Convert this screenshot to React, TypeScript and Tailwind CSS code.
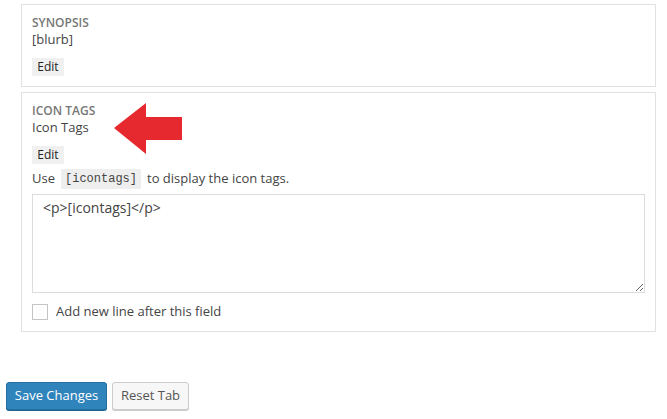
import React from 'react';

const font = { fontFamily: '"Open Sans", "Noto Sans", sans-serif' };

function EditButton() {
  return (
    <div className="flex mt-[10px]">
      <button className="h-[18px] w-[32px] bg-[#f0f0f0] text-[12px] leading-[18px] text-[#222]">
        Edit
      </button>
    </div>
  );
}

function Arrow() {
  return (
    <svg className="absolute left-[114px] top-[103px]" width="68" height="51" viewBox="0 0 68 51">
      <polygon points="0,25 32,0 32,14 68,14 68,37 32,37 32,51" fill="#e5292e" />
    </svg>
  );
}

export default function App() {
  return (
    <div className="relative w-[667px] h-[419px] bg-white text-[#444]" style={font}>
      <div className="pl-[21px] pr-[11px] pt-[4px]">
        <div className="border border-[#e1e1e1] h-[83px] px-[10px] pt-[11px]">
          <div className="text-[12px] leading-[14px] font-semibold text-[#777]">SYNOPSIS</div>
          <div className="text-[13px] leading-[18px] text-[#444]">[blurb]</div>
          <EditButton />
        </div>

        <div className="border border-[#e1e1e1] h-[240px] mt-[5px] px-[10px] pt-[11px]">
          <div className="text-[12px] leading-[14px] font-semibold text-[#777]">ICON TAGS</div>
          <div className="text-[13px] leading-[18px] text-[#444]">Icon Tags</div>
          <EditButton />
          <div className="flex items-center h-[20px] mt-[5px] text-[13px]">
            <span>Use</span>
            <code
              className="mx-[6px] px-[4px] h-[20px] leading-[20px] bg-[#eeeeee] text-[12px] text-[#444]"
              style={{ fontFamily: '"Liberation Mono", monospace' }}
            >
              [icontags]
            </code>
            <span>to display the icon tags.</span>
          </div>
          <textarea
            className="block w-full h-[99px] mt-[5px] border border-[#dcdcdc] pl-[10px] pr-[6px] pt-[4px] text-[14px] leading-[18px] text-[#444] outline-none resize-y"
            style={font}
            defaultValue="<p>[icontags]</p>"
          />
          <label className="flex items-center mt-[9px] text-[13px] text-[#444]">
            <span className="w-[16px] h-[16px] border border-[#c4c4c4] bg-white" />
            <span className="ml-[8px]">Add new line after this field</span>
          </label>
        </div>
      </div>

      <Arrow />

      <div className="flex gap-[5px] pl-[6px] mt-[50px]">
        <button className="h-[28px] w-[101px] rounded-[3px] bg-[#2f84bc] border border-[#23709f] text-white text-[13px] shadow-[0_1px_0_#1f6490]">
          Save Changes
        </button>
        <button className="h-[28px] w-[77px] rounded-[3px] bg-[#f7f7f7] border border-[#cccccc] text-[#555] text-[13px] shadow-[0_1px_0_#ccc]">
          Reset Tab
        </button>
      </div>
    </div>
  );
}
